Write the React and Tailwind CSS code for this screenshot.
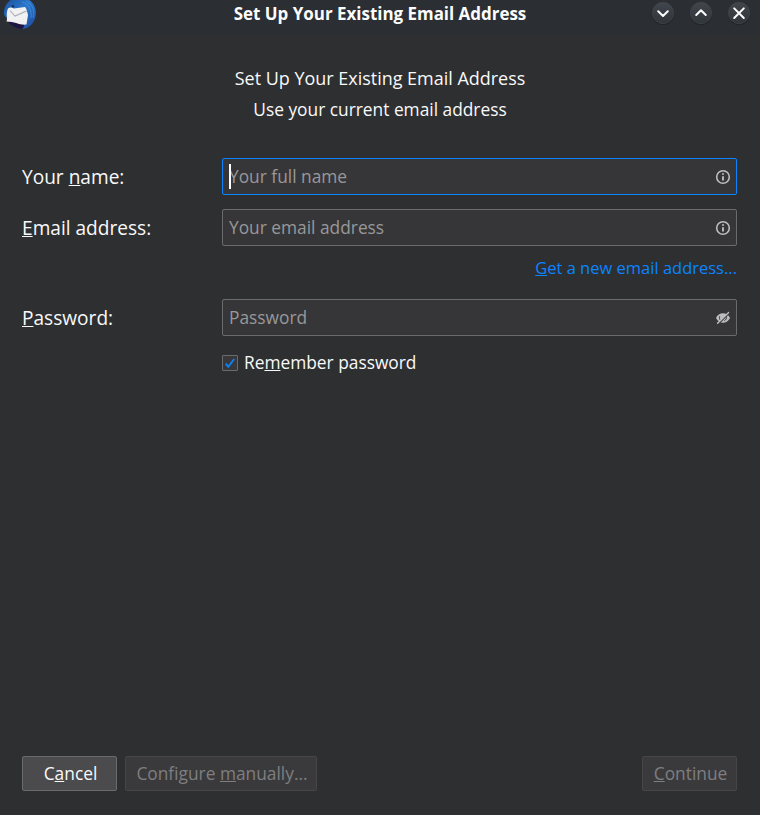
import React from "react";

function Key({ children }) {
  return (
    <span className="underline decoration-1 underline-offset-1 [text-decoration-skip-ink:none]">
      {children}
    </span>
  );
}

function WindowButton({ d }) {
  return (
    <svg className="size-[24px]" viewBox="0 0 24 24" fill="none">
      <defs>
        <linearGradient id="wb" x1="0" y1="0" x2="0" y2="1">
          <stop offset="0" stopColor="#40464c" />
          <stop offset="1" stopColor="#30353a" />
        </linearGradient>
      </defs>
      <circle cx="12" cy="12.8" r="11.2" fill="#202327" />
      <circle cx="12" cy="12" r="10.7" fill="url(#wb)" stroke="#464b50" strokeWidth="0.6" />
      <path d={d} stroke="#fcfcfc" strokeWidth="2" strokeLinecap="round" strokeLinejoin="round" />
    </svg>
  );
}

function MailLogo() {
  return (
    <svg className="h-[30px] w-[34px]" viewBox="0 0 34 30">
      <defs>
        <linearGradient id="bird" x1="0" y1="0" x2="1" y2="1">
          <stop offset="0" stopColor="#1c4f98" />
          <stop offset="0.5" stopColor="#2b78cc" />
          <stop offset="1" stopColor="#1b4596" />
        </linearGradient>
      </defs>
      <path d="M1 13C1 4 8-3 17-3C26-3 33 4 33 13C33 22 26 29 19 29C21 27 21 25 20 23L4 18C2 17 1 15 1 13Z" fill="url(#bird)" />
      <path d="M4 20L21 23C22 26 20 28 19 29C12 28 7 25 4 20Z" fill="#1d1644" />
      <path d="M5 8.5C7 7 9 7.5 11 8.5L22 7C24 9 24 12 25 15L23.5 24.5C17 25.5 12 21.5 3.5 21.5C5 18 2.5 14 5 8.5Z" fill="#f1f1f2" />
      <path d="M7 10.5L12 16L23.5 11" fill="none" stroke="#a9adb3" strokeWidth="1.1" />
      <path d="M19 2C26 4 29 10 28 18M23 1C30 5 32 11 30 18" fill="none" stroke="#4a9ee6" strokeWidth="1" opacity="0.6" />
      <circle cx="10" cy="6.3" r="1.3" fill="#1b3358" />
    </svg>
  );
}

function InfoIcon() {
  return (
    <svg className="size-[16px]" viewBox="0 0 16 16" fill="none">
      <circle cx="8" cy="8" r="6.3" stroke="#bdbdbe" strokeWidth="1.6" />
      <circle cx="8" cy="5.1" r="1" fill="#bdbdbe" />
      <path d="M8 7.2V11.5" stroke="#bdbdbe" strokeWidth="1.9" />
    </svg>
  );
}

function HiddenIcon() {
  return (
    <svg className="size-[16px]" viewBox="0 0 16 16" fill="none">
      <path d="M1 8C2.5 4.8 5 3.3 8 3.3S13.5 4.8 15 8C13.5 11.2 11 12.7 8 12.7S2.5 11.2 1 8Z" fill="#bdbdbe" />
      <path d="M4.7 6.2C4.1 8 4.6 9.4 5.6 10.4M11.4 6.5C11.9 8 11.2 9.8 9.3 10.8" stroke="#38383a" strokeWidth="1" />
      <path d="M3.4 14L14.4 3" stroke="#38383a" strokeWidth="1.2" />
      <path d="M2.6 13.2L13.6 2.4" stroke="#bdbdbe" strokeWidth="1.4" strokeLinecap="round" />
    </svg>
  );
}

function Field({ text, icon, focused = false }) {
  return (
    <div
      className={
        "flex h-[37px] w-[515px] items-center justify-between rounded-[2px] border pr-[5px] pl-[6px] text-[17.33px] text-[#98989a] bg-[#363638] " +
        (focused ? "border-[#0a84ff]" : "border-[#6b6b6d]")
      }
    >
      <span className="relative mb-[2px] leading-[24px]">
        {text}
        {focused && <span className="absolute top-0 left-0 h-[25px] w-[2px] bg-white" />}
      </span>
      {icon}
    </div>
  );
}

export default function App() {
  return (
    <div className="flex h-[815px] w-[760px] flex-col overflow-hidden bg-[#2e2f31] font-['Open_Sans',sans-serif] text-[17.33px] text-[#f9f9fa]">
      <header className="grid h-[35px] shrink-0 grid-cols-[110px_1fr_110px] bg-[#2b2e33]">
        <div className="pl-[3px]">
          <MailLogo />
        </div>
        <h1 className="text-center text-[16.95px] leading-[27px] font-bold whitespace-nowrap text-[#fcfcfc]">
          Set Up Your Existing Email Address
        </h1>
        <div className="flex gap-[14px] pt-px pl-px">
          <WindowButton d="M7.2 10.2L12 15L16.8 10.2" />
          <WindowButton d="M7.2 14L12 9.2L16.8 14" />
          <WindowButton d="M7.2 7.4L16.8 17M16.8 7.4L7.2 17" />
        </div>
      </header>

      <main className="flex grow flex-col pr-[23px] pl-[22px]">
        <div className="-mr-px pt-[28px] text-center leading-[31px]">
          <p className="text-[17.97px]">Set Up Your Existing Email Address</p>
          <p>Use your current email address</p>
        </div>

        <div className="mt-[33px] flex items-center">
          <label className="w-[200px] pt-[2px] text-[19.1px]">Your <Key>n</Key>ame:</label>
          <Field text="Your full name" icon={<InfoIcon />} focused />
        </div>
        <div className="mt-[14px] flex items-center">
          <label className="w-[200px] pt-[2px] text-[19.1px]"><Key>E</Key>mail address:</label>
          <Field text="Your email address" icon={<InfoIcon />} />
        </div>
        <a className="mt-[10px] text-right text-[16.5px] leading-[24px] text-[#0a84ff]"><Key>G</Key>et a new email address...</a>
        <div className="mt-[19px] flex items-center">
          <label className="w-[200px] pt-[2px] text-[19.1px]"><Key>P</Key>assword:</label>
          <Field text="Password" icon={<HiddenIcon />} />
        </div>
        <div className="mt-[15px] ml-[200px] flex h-[24px] items-center gap-[6px]">
          <span className="flex size-[16px] items-center justify-center rounded-[1px] border border-[#6b6b6d] bg-[#38383a]">
            <svg className="size-[14px] shrink-0" viewBox="0 0 14 14" fill="none">
              <path d="M2.8 7.6L5.3 10.8L11.2 3" stroke="#0a84ff" strokeWidth="1.8" />
            </svg>
          </span>
          <span className="pb-px">Re<Key>m</Key>ember password</span>
        </div>

        <footer className="mt-auto mb-[24px] flex h-[35px] gap-[8px]">
          <button className="w-[95px] rounded-[2px] border border-[#6b6b6d] bg-[#4b4b4d] pl-[2px]">C<Key>a</Key>ncel</button>
          <button className="w-[192px] rounded-[2px] border border-[#464648] bg-[#3a3a3c] pl-[2px] text-[#7e7e80]">Configure <Key>m</Key>anually...</button>
          <button className="ml-auto w-[95px] rounded-[2px] border border-[#464648] bg-[#3a3a3c] pl-[2px] text-[#7e7e80]"><Key>C</Key>ontinue</button>
        </footer>
      </main>
    </div>
  );
}
